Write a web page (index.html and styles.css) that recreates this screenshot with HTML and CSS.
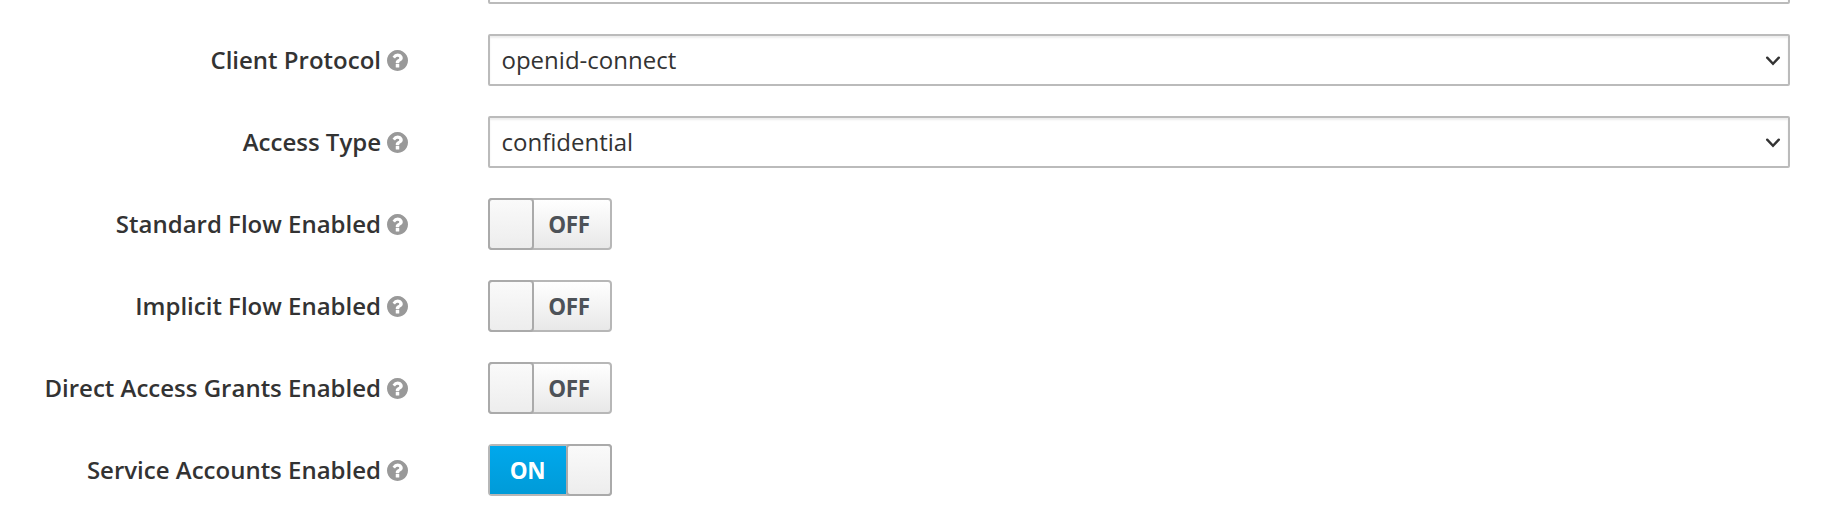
FILE: index.html
```html
<!DOCTYPE html>
<html lang="en">
<head>
<meta charset="utf-8">
<title>Client settings</title>
<link rel="stylesheet" href="styles.css">
</head>
<body>
<svg width="0" height="0" class="symbols" aria-hidden="true">
  <symbol id="help" viewBox="0 128 1536 1536">
    <path d="M896 1376v-192q0-14-9-23t-23-9h-192q-14 0-23 9t-9 23v192q0 14 9 23t23 9h192q14 0 23-9t9-23zm256-672q0-88-55.500-163t-138.500-116-170-41q-243 0-371 213-15 24 8 42l132 100q7 6 19 6 16 0 25-12 53-68 86-92 34-24 86-24 48 0 85.500 26t37.500 59q0 38-20 61t-68 45q-63 28-115.500 86.500t-52.500 125.500v36q0 14 9 23t23 9h192q14 0 23-9t9-23q0-19 21.500-49.500t54.500-49.500q32-18 49-28.500t46-35 44.500-48 28-60.500 12.500-81zm384 192q0 209-103 385.500t-279.500 279.500-385.500 103-385.500-103-279.500-279.500-103-385.500 103-385.500 279.500-279.500 385.500-103 385.500 103 279.500 279.500 103 385.500z"/>
  </symbol>
  <symbol id="chevron" viewBox="0 0 16 10">
    <path d="M2.200 1.700L8 7.800L13.800 1.700" fill="none" stroke="#333" stroke-width="2.400" stroke-linecap="round" stroke-linejoin="miter"/>
  </symbol>
</svg>
<form class="form">
  <div class="row">
    <div class="label"></div>
    <div class="field"></div>
  </div>
  <div class="row">
    <div class="label"><span>Client Protocol</span><svg class="help"><use href="#help"/></svg></div>
    <div class="field"><span>openid-connect</span><svg class="chevron"><use href="#chevron"/></svg></div>
  </div>
  <div class="row">
    <div class="label"><span>Access Type</span><svg class="help"><use href="#help"/></svg></div>
    <div class="field"><span>confidential</span><svg class="chevron"><use href="#chevron"/></svg></div>
  </div>
  <div class="row">
    <div class="label"><span>Standard Flow Enabled</span><svg class="help"><use href="#help"/></svg></div>
    <div class="switch"><span class="knob"></span><span class="state">OFF</span></div>
  </div>
  <div class="row">
    <div class="label"><span>Implicit Flow Enabled</span><svg class="help"><use href="#help"/></svg></div>
    <div class="switch"><span class="knob"></span><span class="state">OFF</span></div>
  </div>
  <div class="row">
    <div class="label"><span>Direct Access Grants Enabled</span><svg class="help"><use href="#help"/></svg></div>
    <div class="switch"><span class="knob"></span><span class="state">OFF</span></div>
  </div>
  <div class="row">
    <div class="label"><span>Service Accounts Enabled</span><svg class="help"><use href="#help"/></svg></div>
    <div class="switch on"><span class="state">ON</span><span class="knob"></span></div>
  </div>
</form>
</body>
</html>
```

FILE: styles.css
```css
* {
  box-sizing: border-box;
}

body {
  margin: 0;
  height: 516px;
  overflow: hidden;
  background: #fff;
  color: #333;
  font: 24px/36px "Open Sans", sans-serif;
}

.symbols {
  display: block;
}

.form {
  display: flex;
  flex-direction: column;
  gap: 30px;
  margin-top: -48px;
  padding-right: 42px;
}

.row {
  display: grid;
  grid-template-columns: 408px 1fr;
  column-gap: 80px;
  height: 52px;
}

.label {
  display: flex;
  align-items: center;
  justify-content: flex-end;
  gap: 6px;
  font-weight: 600;
  white-space: nowrap;
}

.help {
  width: 21px;
  height: 21px;
  fill: #999;
}

.field {
  display: flex;
  align-items: center;
  justify-content: space-between;
  padding: 0 7px 0 12px;
  border: 2px solid #bbb;
  border-radius: 2px;
  box-shadow: inset 0 2px 2px rgba(0, 0, 0, 0.075);
}

.field span {
  margin-left: -0.5px;
}

.chevron {
  width: 16px;
  height: 10px;
  margin-top: 2px;
}

.switch {
  display: flex;
  width: 124px;
  height: 52px;
  border: 2px solid #b7b7b7;
  border-radius: 4px;
  background: linear-gradient(#fff, #e8e8e8);
  color: #4d5258;
  font-size: 22.5px;
  font-weight: 700;
  letter-spacing: -0.3px;
}

.state {
  flex: 1;
  display: flex;
  align-items: center;
  justify-content: center;
  padding: 1px 6px 0 0;
}

.knob {
  width: 46px;
  margin: -2px 0 -2px -2px;
  border: 2px solid #aaa;
  border-radius: 4px;
  background: linear-gradient(#fafafa, #ededed);
}

.on .state {
  padding: 1px 1px 0 0;
  background: linear-gradient(#00a8ec, #009bd8);
  color: #fff;
}

.on .knob {
  margin: -2px -2px -2px 0;
}
```
